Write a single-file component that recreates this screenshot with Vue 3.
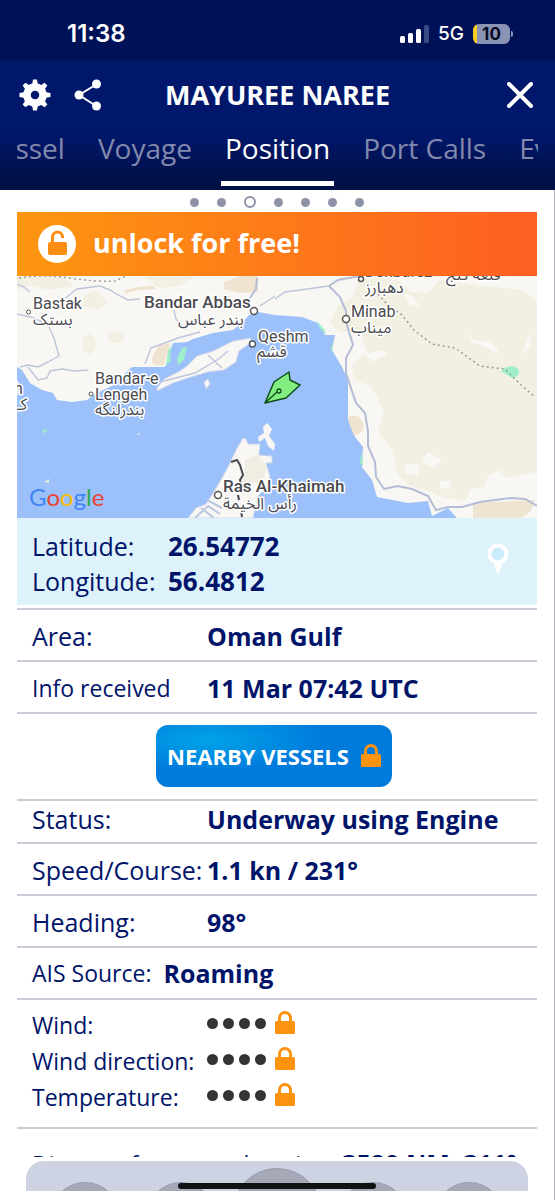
<script setup>
import { onMounted, ref } from 'vue'

const tabs = ['Vessel', 'Voyage', 'Position', 'Port Calls', 'Events']
const activeTab = ref('Position')
const strip = ref(null)

const details = [
  { label: 'Status:', value: 'Underway using Engine', kind: 'short' },
  { label: 'Speed/Course:', value: '1.1 kn / 231°', kind: '' },
  { label: 'Heading:', value: '98°', kind: '' },
  { label: 'AIS Source:', value: 'Roaming', kind: 'inline small' },
]
const locked = ['Wind:', 'Wind direction:', 'Temperature:']
const teeth = [0, 45, 90, 135, 180, 225, 270, 315]

function centreActive() {
  const el = strip.value
  const item = el.querySelector('.tab.active')
  el.scrollLeft = item.offsetLeft - el.offsetLeft + item.offsetWidth / 2 - el.clientWidth / 2
}

onMounted(() => {
  centreActive()
  document.fonts.ready.then(centreActive)
})
</script>

<template>
  <div class="screen">
    <div class="status-bar">
      <span class="time">11:38</span>
      <span class="status-right">
        <svg class="signal" viewBox="0 0 29 18" aria-hidden="true">
          <rect x="0" y="11" width="5" height="7" rx="1.5" fill="#fff" />
          <rect x="8" y="8" width="5" height="10" rx="1.5" fill="#fff" />
          <rect x="16" y="4" width="5" height="14" rx="1.5" fill="#fff" />
          <rect x="24" y="0" width="5" height="18" rx="1.5" fill="#3a4a84" />
        </svg>
        <span class="network">5G</span>
        <span class="battery"><span class="cell">10</span><span class="cap"></span></span>
      </span>
    </div>

    <header class="header">
      <div class="title-row">
        <button class="icon-btn" aria-label="Settings">
          <svg viewBox="0 0 32 32" width="32" height="32">
            <g fill="#fff">
              <path v-for="a in teeth" :key="a" d="M13 6 L14 0.5 H18 L19 6 Z" :transform="`rotate(${a} 16 16)`" />
            </g>
            <circle cx="16" cy="16" r="8" fill="none" stroke="#fff" stroke-width="7.5" />
          </svg>
        </button>
        <button class="icon-btn share" aria-label="Share">
          <svg viewBox="0 0 28 32" width="28" height="32">
            <path d="M23 5 L5 16 L23 27.5" fill="none" stroke="#fff" stroke-width="2" />
            <circle cx="22.500" cy="5" r="4.500" fill="#fff" />
            <circle cx="5" cy="16" r="4.500" fill="#fff" />
            <circle cx="22.500" cy="27" r="4.500" fill="#fff" />
          </svg>
        </button>
        <h1>MAYUREE NAREE</h1>
        <button class="icon-btn close" aria-label="Close">
          <svg viewBox="0 0 26 26" width="26" height="26">
            <path d="M2 2 L24 24 M24 2 L2 24" stroke="#fff" stroke-width="4" stroke-linecap="round" />
          </svg>
        </button>
      </div>
      <nav ref="strip" class="tabs">
        <a v-for="t in tabs" :key="t" href="#" class="tab" :class="{ active: t === activeTab }" @click.prevent="activeTab = t">{{ t }}</a>
      </nav>
    </header>

    <main class="content">
      <div class="pager">
        <span v-for="n in 7" :key="n" class="dot" :class="{ current: n === 3 }"></span>
      </div>

      <button class="unlock">
        <svg viewBox="0 0 38 38" width="38" height="38" aria-hidden="true">
          <circle cx="19" cy="19" r="19" fill="#fff" />
          <rect x="10" y="17" width="19" height="13" rx="2" fill="#fd8d12" />
          <path d="M14.500 18 V12 a5 5 0 0 1 10 0 V13" fill="none" stroke="#fd8d12" stroke-width="3" />
        </svg>
        <span>unlock for free!</span>
      </button>

      <svg class="map" viewBox="17 276 520 242" role="img" aria-label="Map">
        <rect x="17" y="276" width="520" height="242" fill="#f9f7f3" />
        <g fill="#f2efe3">
          <path d="M372 276 L400 281 L410 292 L428 293 L440 280 L470 284 L520 290 L537 300 V386 V472 L505 478 L500 470 L488 476 L485 486 L470 490 L466 500 L445 498 L425 490 L410 486 L398 474 L395 462 L392 450 L378 432 L384 412 L379 400 L370 386 L355 380 L352 366 L366 350 L360 330 L340 332 L330 322 L338 306 L352 298 L360 276 Z" />
          <path d="M17 276 H60 L75 286 L48 290 L30 285 L17 290 Z" />
          <path d="M84 296 L96 290 L108 302 L98 309 L82 306 Z" />
          <ellipse cx="89" cy="344" rx="7" ry="10" />
          <ellipse cx="116" cy="337" rx="8" ry="6" />
          <path d="M143 276 H195 L180 286 L160 288 Z" />
        </g>
        <g fill="#faf8f5">
          <path d="M467 334 Q474 342 490 342 Q500 350 497 354 Q484 344 472 343 Z M529 332 L531 346 L522 354 Z M428 452 L442 460 L434 468 L422 462 Z M406 464 L419 465 L418 475 L405 473 Z M440 482 L450 480 L450 489 L440 488 Z M412 296 L420 306 L410 305 L402 292 Z M365 354 L382 350 L388 354 L372 362 Z M362 340 L368 354 L360 352 Z" />
        </g>
        <g fill="#efe3d2">
          <path d="M224 282 L240 276 H258 V292 L240 293 L224 289 Z M152 358 L158 346 L170 343 L164 366 L153 364 Z M473 503 L535 500 L530 512 L520 518 H473 Z" />
        </g>
        <path d="M125 292 Q140 287 155 288" fill="none" stroke="#efe3cd" stroke-width="3" />

        <path d="M17 367 L22 370 L30 383 L42 390 L53 393 L57 400 L72 402 L87 400 L95 394 L112 386 L123 375 L132 367 L147 367 L165 367 L170 352 L173 343 L187 342 L193 339 L213 333 L233 330 L243 322 L249 315 L258 312 L275 315 L302 317 L318 323 L325 335 L335 335 L332 350 L342 367 L348 380 L348 418 L355 437 L363 447 L362 467 L372 480 L377 497 L408 503 L428 501 L432 516 L448 508 L457 518 H17 Z" fill="#9cc0f9" />
        <path d="M349 416 L358 416 Q365 422 363 430 Q358 435 354 436 L348 420 Z" fill="#efe3d2" />
        <path d="M157 388 L164 379 L180 371 L187 366 L197 356 L213 351 L233 341 L251 338 L249 344 L239 351 L236 362 L224 370 L208 372 L188 378 L173 383 L157 391 Z M204 382 L208 379 L210 384 L206 389 Z" fill="#f9f7f3" stroke="#c8d4ec" stroke-width="1" />
        <path d="M188 518 L196 508 L206 504 L213 493 L222 478 L230 463 L236 450 L243 438 L246 439 L248 444 L260 444 L259 455 L272 456 L272 463 L266 463 L270 476 L268 486 L258 496 L253 518 Z" fill="#f9f7f3" stroke="#c8d4ec" stroke-width="1" />
        <path d="M245 460 L257 455 L267 467 L262 484 L244 482 Z" fill="#f0ede2" />
        <path d="M267 423 L272 429 L269 436 L275 444 L274 451 L268 446 L265 438 L259 442 L258 437 L264 433 L263 427 Z" fill="#f9f7f3" />
        <path d="M195 518 L208 506 L220 514 M201 508 L214 518 M207 500 L222 508" fill="none" stroke="#bac7df" stroke-width="2" />
        <path d="M166 366 L168 350 L172 345 L170 354 L171 360 Z M178 365 L177 358 L182 348 L187 347 L184 360 Z M316 320 L325 330 L326 335 L320 328 Z M332 340 L333 349 L331 352 Z M362 450 L363 466 L360 463 Z M501 371 Q512 362 519 370 Q520 377 512 378 Z M42 430 L47 429 L45 434 Z" fill="#9fedcb" />
        <path d="M137 433 L141 434 L138 435 Z M44 482 L49 479 L49 483 Z" fill="#d7eee4" />

        <g fill="none" stroke="#bcc5dc" stroke-width="1.400">
          <path d="M17 284 L24 287 L30 292 M17 314 L34 318 L48 325 L54 338 L59 356 L48 362 L38 367 L28 365 L20 367 M28 367 L38 380 L47 378 L50 371 L62 369 L75 371 L88 370 M60 302 L68 296 L77 289 L100 286 L110 290 L118 295 L128 300 L140 299 M145 364 L151 348 L178 338 L200 332 M186 330 L176 319 L174 310 M260 306 L275 296 M275 299 L285 292 L329 286 M160 382 L195 373 L217 360 L228 351 M208 355 L222 368" />
        </g>
        <g fill="none" stroke="#b3bdd5" stroke-width="2">
          <path d="M257 278 L256 289 L250 298 M329 286 L338 280 L360 276 M329 286 L340 297 L346 311 L347 325 L353 345 L346 358 L346 373 L356 403 L365 413 L368 431 L368 446 L375 462 L376 477 L384 489 L398 486 L412 489 L428 496 L436 510 L448 507 L462 507 L480 502 L510 498 L525 499 L537 506" />
        </g>
        <g fill="none" stroke="#9b9b9b" stroke-width="1.500" stroke-dasharray="2 3">
          <path d="M19 278 Q45 274 70 278 T115 281 L126 276" />
          <path d="M378 294 L388 305 L402 315 L414 330 L432 344 L455 348 L480 366 L505 369 L520 384 L535 397" />
        </g>
        <path d="M231 462 L237 460 L240 465 L243 475 L240 480 L241 486 M238 495 L239 500 M241 510 L242 517" fill="none" stroke="#484850" stroke-width="2" />

        <g fill="#fff" stroke="#555" stroke-width="1.500">
          <circle cx="28.500" cy="312" r="2" stroke-width="1" />
          <circle cx="254" cy="311" r="3.500" />
          <circle cx="252.500" cy="344" r="3" />
          <circle cx="346" cy="319" r="3.500" />
          <circle cx="361" cy="279" r="2.500" />
          <circle cx="91" cy="394" r="2" stroke-width="1" />
          <circle cx="218" cy="495" r="3.500" />
        </g>
        <g class="labels">
          <text x="33" y="309">Bastak</text>
          <text x="33" y="325" class="ar">بستک</text>
          <text x="144" y="308" class="city">Bandar Abbas</text>
          <text x="178" y="325" class="ar">بندر عباس</text>
          <text x="258" y="342">Qeshm</text>
          <text x="257" y="357" class="ar">قشم</text>
          <text x="351" y="317">Minab</text>
          <text x="351" y="333" class="ar">میناب</text>
          <text x="365" y="277">Dehbarez</text>
          <text x="365" y="293" class="ar">دهبارز</text>
          <text x="446" y="280" class="ar">قلعه گنج</text>
          <text x="95" y="384">Bandar-e</text>
          <text x="95" y="400">Lengeh</text>
          <text x="95" y="415" class="ar">بندرلنگه</text>
          <text x="14" y="394">h</text>
          <text x="13" y="410" class="ar">ک</text>
          <text x="223" y="492" class="city">Ras Al-Khaimah</text>
          <text x="223" y="509" class="ar">رأس الخيمة</text>
        </g>
        <path d="M265 403 L274 382 L289 372 L290 380 L300 385 L286 398 Z" fill="#82ee82" stroke="#0e4d18" stroke-width="1.500" stroke-linejoin="round" />
        <path d="M265 403 L277 392" stroke="#0e4d18" stroke-width="1.300" />
        <circle cx="279" cy="391" r="2" fill="none" stroke="#0e4d18" stroke-width="1.300" />
        <text x="29" y="506" class="google"><tspan fill="#4285f4">G</tspan><tspan fill="#ea4335">o</tspan><tspan fill="#fbbc05">o</tspan><tspan fill="#4285f4">g</tspan><tspan fill="#34a853">l</tspan><tspan fill="#ea4335">e</tspan></text>
      </svg>

      <section class="coords">
        <dl>
          <dt>Latitude:</dt><dd>26.54772</dd>
          <dt>Longitude:</dt><dd>56.4812</dd>
        </dl>
        <svg viewBox="0 0 22 33" width="22" height="33" aria-hidden="true">
          <path d="M6 18 L11 33 L16 18 Z" fill="#fff" />
          <circle cx="11" cy="11" r="8.500" fill="#cdecfb" stroke="#fff" stroke-width="4" />
        </svg>
      </section>

      <dl class="rows">
        <div class="row"><dt>Area:</dt><dd>Oman Gulf</dd></div>
        <div class="row small"><dt>Info received</dt><dd>11 Mar 07:42 UTC</dd></div>
      </dl>

      <div class="nearby-row">
        <button class="nearby">
          <span>NEARBY VESSELS</span>
          <svg class="lock" viewBox="0 0 20 24" width="20" height="24" aria-hidden="true">
            <rect x="0" y="10" width="20" height="13" rx="1.500" />
            <path d="M4.500 12 V7 a5.500 5.500 0 0 1 11 0 V12" />
          </svg>
        </button>
      </div>

      <dl class="rows">
        <div v-for="d in details" :key="d.label" class="row" :class="d.kind"><dt>{{ d.label }}</dt><dd>{{ d.value }}</dd></div>
      </dl>

      <dl class="weather small">
        <div v-for="l in locked" :key="l" class="weather-row">
          <dt>{{ l }}</dt>
          <dd>
            <i v-for="n in 4" :key="n" class="bullet"></i>
            <svg class="lock" viewBox="0 0 20 24" width="20" height="24" aria-hidden="true">
              <rect x="0" y="10" width="20" height="13" rx="1.500" />
              <path d="M4.500 12 V7 a5.500 5.500 0 0 1 11 0 V12" />
            </svg>
          </dd>
        </div>
      </dl>

      <dl class="distance small"><dt>Distance from your location:</dt><dd>3520 NM, 311°</dd></dl>
    </main>

    <footer class="footer">
      <div class="tray">
        <button v-for="n in 5" :key="n" class="round" :class="{ big: n === 3 }" :aria-label="`Menu item ${n}`"></button>
      </div>
      <span class="home-bar"></span>
    </footer>
  </div>
</template>

<style>
html, body { background: #fff; }
body { margin: 0; overflow: hidden; }
</style>

<style scoped>
* { box-sizing: border-box; }
.screen {
  display: flex;
  flex-direction: column;
  height: 100vh;
  color: #00146a;
  font-family: "Open Sans", "Noto Sans", sans-serif;
}
button { border: 0; padding: 0; background: none; font: inherit; color: inherit; cursor: pointer; }
svg { display: block; flex: none; }
dl, dd, h1 { margin: 0; }

.status-bar {
  display: flex;
  justify-content: space-between;
  align-items: center;
  flex: none;
  height: 61px;
  padding: 6px 42px 0 67px;
  background: #001257;
  color: #fff;
  font-family: Inter, sans-serif;
}
.time { font-size: 24px; font-weight: 600; }
.status-right { display: flex; align-items: center; gap: 9px; }
.signal { width: 29px; height: 18px; }
.network { font-size: 19px; font-weight: 500; }
.battery { display: flex; align-items: center; gap: 1px; }
.cell {
  width: 37px;
  border-radius: 6px;
  background: linear-gradient(90deg, #fbd01c 4px, #8b93b4 4px);
  color: #050b22;
  font-size: 17px;
  font-weight: 700;
  line-height: 20px;
  text-align: center;
}
.cap { width: 2px; height: 6px; border-radius: 0 2px 2px 0; background: #8b93b4; }

.header {
  flex: none;
  height: 129px;
  padding: 0 17px;
  background: linear-gradient(#00176c 0, #00176c 55%, #000f45 96%);
  color: #fff;
}
.title-row { position: relative; display: flex; align-items: center; height: 67px; }
.icon-btn { display: block; margin-left: 2px; }
.share { margin-left: 23px; }
.close { margin-left: auto; margin-right: 5px; }
h1 {
  position: absolute;
  left: 80px;
  right: 80px;
  font-size: 27px;
  font-weight: 700;
  line-height: 36px;
  text-align: center;
  pointer-events: none;
}
.tabs { display: flex; gap: 25px; overflow: hidden; }
.tab {
  flex: none;
  height: 58px;
  padding: 0 4px;
  color: #8289ad;
  font-size: 28px;
  line-height: 40px;
  text-decoration: none;
}
.tab.active { color: #fff; border-bottom: 5px solid #fff; }

.content {
  flex: 1;
  min-height: 0;
  padding: 0 17px;
  border-right: 1px solid #b9b9bd;
  overflow: hidden;
}
.pager { display: flex; justify-content: center; align-items: center; gap: 18px; height: 22px; padding-top: 2px; }
.dot { width: 9px; height: 9px; border-radius: 50%; background: #8d92a6; }
.dot.current { width: 12px; height: 12px; background: #fff; border: 2px solid #8d92a6; }

.unlock {
  display: flex;
  align-items: center;
  gap: 17px;
  width: 100%;
  height: 64px;
  padding-left: 21px;
  background: linear-gradient(90deg, #fd9610, #fe5f22);
  color: #fff;
  font-size: 27px;
  font-weight: 700;
}
.unlock span { padding-bottom: 4px; }
.map { width: 100%; }
.labels text {
  fill: #4a4a50;
  stroke: #fff;
  stroke-width: 3px;
  paint-order: stroke;
  stroke-linejoin: round;
  font: 16px Roboto, sans-serif;
}
.labels .city { font-size: 17px; font-weight: 500; }
.labels .ar { font: 16px "Noto Sans Arabic", "DejaVu Sans", sans-serif; }
.google { font: 24px Lato, sans-serif; }

.coords {
  display: flex;
  justify-content: space-between;
  align-items: center;
  height: 87px;
  padding: 0 28px 4px 15px;
  background: #def2fb;
}
.coords dl { display: grid; grid-template-columns: 136px auto; padding-top: 8px; line-height: 35px; }
dt { font-size: 25px; white-space: nowrap; }
dd { font-size: 25px; font-weight: 700; white-space: nowrap; }
.coords dd { font-size: 26px; }
.small dt { font-size: 23px; }

.rows { margin-top: 3px; }
.nearby-row + .rows { margin-top: 0; }
.row {
  display: grid;
  grid-template-columns: 175px 1fr;
  align-items: center;
  height: 52px;
  padding: 2px 0 0 15px;
  border-top: 2px solid #cbccd8;
}
.row.short { height: 43px; padding-top: 0; padding-bottom: 6px; }
.row.inline { display: flex; gap: 12px; padding-top: 0; }
.nearby-row {
  display: flex;
  justify-content: center;
  padding: 11px 6px 12px 0;
  border-top: 2px solid #cbccd8;
}
.nearby {
  display: flex;
  justify-content: center;
  align-items: center;
  gap: 12px;
  width: 236px;
  height: 62px;
  border-radius: 12px;
  background: radial-gradient(ellipse 50% 50% at 22% 24%, #00a3e8, #007bdc);
  color: #fff;
  font-size: 22px;
  font-weight: 700;
  white-space: nowrap;
}
.lock { fill: #fd930f; }
.lock path { fill: none; stroke: #fd930f; stroke-width: 3; }
.weather { padding: 7px 0 12px 15px; border-top: 2px solid #cbccd8; border-bottom: 2px solid #cbccd8; }
.weather-row { display: grid; grid-template-columns: 175px 1fr; align-items: center; height: 36px; }
.weather-row dd { display: flex; align-items: center; gap: 5px; padding-bottom: 4px; }
.weather-row .lock { margin-left: 4px; }
.bullet { width: 11px; height: 11px; border-radius: 50%; background: #333; }
.distance { display: flex; justify-content: space-between; align-items: baseline; padding: 17px 20px 0 15px; }

.footer { position: relative; flex: none; height: 43px; padding: 4px 26px 9px; border-right: 1px solid #b9b9bd; }
.tray {
  display: grid;
  grid-template-columns: repeat(5, 96px);
  justify-content: center;
  justify-items: center;
  height: 30px;
  padding-top: 21px;
  border-radius: 18px 18px 0 0;
  background: #cdd3e2;
  overflow: hidden;
}
.round { width: 70px; height: 70px; border-radius: 50%; background: #a6aab8; border: 1px solid #959aaa; }
.round.big { width: 90px; height: 90px; margin-top: -14px; }
.home-bar {
  position: absolute;
  left: 50%;
  bottom: 11px;
  width: 198px;
  height: 6px;
  margin-left: -99px;
  border-radius: 3px;
  background: #111214;
}
</style>
